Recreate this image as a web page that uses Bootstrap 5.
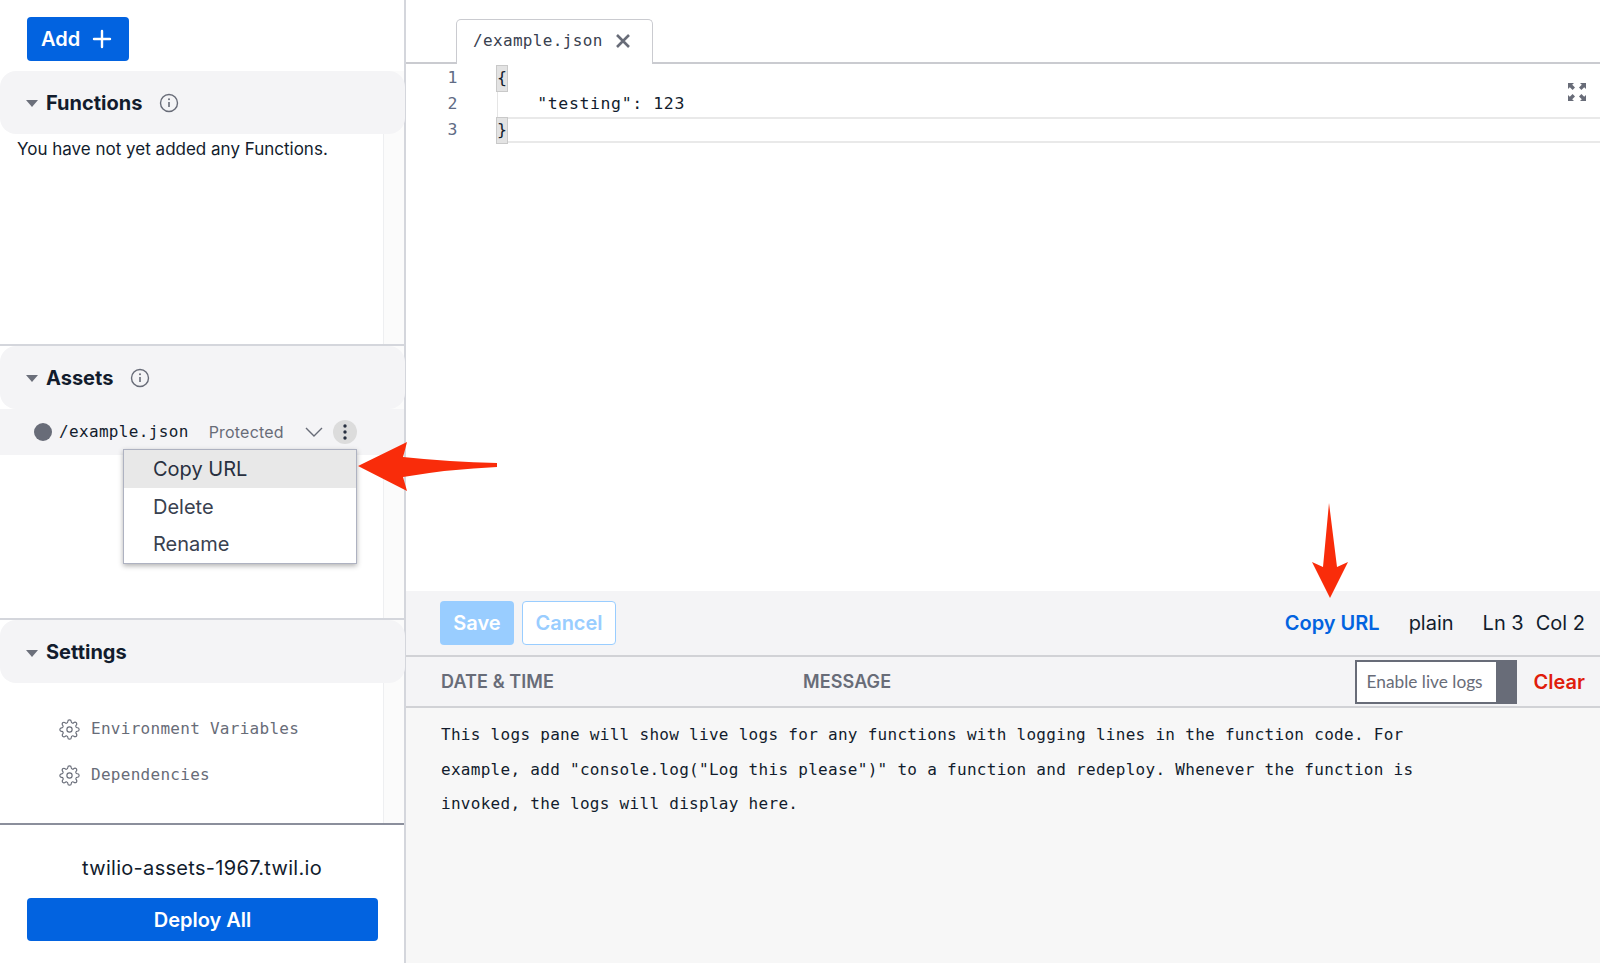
<!DOCTYPE html>
<html lang="en"><head><meta charset="utf-8"><title>Assets</title>
<link href="https://cdn.jsdelivr.net/npm/bootstrap@5.3.0/dist/css/bootstrap.min.css" rel="stylesheet">
<style>
html,body{height:963px;overflow:hidden}
body{font-family:Inter,"Liberation Sans",sans-serif;color:#121c2d;background:#fff;position:relative}
.mono{font-family:"DejaVu Sans Mono",monospace;font-size:16px;letter-spacing:.29px}
.side{width:406px;height:963px;border-right:2px solid #d4d6dc;position:relative}
.addwrap{height:71px;padding:17px 0 0 27px}
.btn-add{background:#0263e0;color:#fff;font-weight:600;font-size:20px;width:102px;height:44px;border-radius:4px;padding:0 0 0 14px;border:0;line-height:44px;text-align:left}
.btn-add:hover{background:#0263e0;color:#fff}
.plus{margin-left:11px}
.sec{position:relative}
.sec-fn{height:273px}.sec-as{height:275px;border-top:2px solid #d4d6dc}.sec-se{height:205px;border-top:2px solid #d4d6dc}
.sbar{position:absolute;right:0;top:0;bottom:0;width:21px;background:#fbfbfb;border-left:1px solid #eeeff1}
.head{position:relative;z-index:1;height:63px;background:#f4f4f6;border-radius:16px;padding:1px 0 0 26px;font-size:20px;font-weight:700;margin-right:-1px}
.caret{width:0;height:0;border-left:6px solid transparent;border-right:6px solid transparent;border-top:7px solid #6b6f7a;margin-right:8px;margin-top:2px}
.info{margin-left:17px}
.empty{position:relative;z-index:1;font-size:17px;padding:3px 0 0 17px;margin:0}
.asset{position:relative;z-index:1;height:46px;background:#f4f4f6;padding-left:34px}
.dot{width:18px;height:18px;border-radius:50%;background:#686c78;margin-right:7px}
.asset .mono{letter-spacing:.34px}
.prot{font-size:16px;color:#686c78;margin-left:20px;letter-spacing:.2px}
.chev{margin-left:21px}
.kebab{width:24px;height:24px;border-radius:50%;background:#dcdcdc;margin-left:10px}
.menu-box{position:absolute;z-index:3;left:123px;top:449px;width:234px;height:115px;background:#fff;border:1px solid #aeb2c1;border-radius:0;box-shadow:0 2px 5px rgba(0,0,0,.3);padding:0;margin:0}
.menu-box .dropdown-item{height:37.5px;line-height:38px;padding:0 0 0 29px;font-size:20px;color:#39414f}
.menu-box .dropdown-item.on{background:#e8e8e8;color:#283040}
.setlist{position:relative;z-index:1;margin:0;list-style:none;padding:23px 0 0}
.setitem{height:46px;padding-left:59px;color:#686c78;gap:11px}
.setitem .mono{letter-spacing:.28px}
.foot{border-top:2px solid #8b8f9c;height:140px;padding:0 27px}
.domain{font-size:20px;text-align:center;padding-top:28px;height:73px;margin:0;letter-spacing:.3px}
.btn-dep{background:#0263e0;color:#fff;font-weight:600;font-size:20px;width:351px;height:43px;border-radius:4px;border:0;padding:0;display:block}
.btn-dep:hover{background:#0263e0;color:#fff}
.main{flex:1;min-width:0;height:963px}
.tabs{height:64px;border-bottom:2px solid #cacbd0;padding-left:50px;position:relative}
.tabx{width:197px;height:45px;margin-top:18px;background:#fff;border:1px solid #cacbd0;border-bottom:0;border-radius:5px 5px 0 0;padding:0 0 2px 16px;position:relative;top:1px;color:#39414f;gap:12px}
.tabx .mono{letter-spacing:.34px}
.editor{height:527px;position:relative;padding-top:1px;font-size:16.5px;letter-spacing:.57px}
.codeline{height:26px;line-height:26px;position:relative}
.num{position:absolute;left:34px;width:18px;text-align:right;color:#606b85;top:0}
.code{position:absolute;left:91px;white-space:pre;color:#121c2d;top:0}
.code-in{left:89px;letter-spacing:.62px}
.brk{display:inline-block;width:10px;height:25px;line-height:24px;background:#e3e3e3;outline:1px solid #c9c9c9}
.indent{position:absolute;left:91px;top:1px;height:78px;width:1px;background:#e5e5e5}
.lineh{position:absolute;left:102px;right:0;height:2px;background:#e9e9e9}
.lh1{top:53px}.lh2{top:77px}
.expand{position:absolute;right:14px;top:19px}
.stat{height:66px;background:#f4f4f6;border-bottom:2px solid #d1d2d6;padding:0 15px 0 34px}
.btn-save{font-weight:600;font-size:20px;width:74px;height:44px;border-radius:4px;padding:0}
.btn-can{font-weight:600;font-size:20px;width:94px;height:44px;border-radius:4px;padding:0;margin-left:8px}
.btn-save:disabled{opacity:1;background:#99cdff;color:#fff;border:0}
.btn-can:disabled{opacity:1;background:#fff;color:#99cdff;border:1px solid #99cdff}
.stat-r{font-size:20px}
.lnk{color:#0263e0;font-weight:600;text-decoration:none;margin-right:29px}
.lang{margin-right:29px}.ln{margin-right:12px}
.lhead{height:51px;background:#f4f4f6;border-bottom:2px solid #d1d2d6;padding:0 15px 0 35px;color:#686c78;font-weight:600;font-size:18px;letter-spacing:.1px}
.lhead .h1x{width:362px}
.tog{width:162px;height:44px;border:2px solid #686c78;background:#fff;font-family:Lato,sans-serif;font-size:17.3px;font-weight:400;color:#686c78;padding-left:10px;position:relative;margin-left:auto;margin-right:17px;letter-spacing:0}
.tog i{position:absolute;right:0;top:0;bottom:0;width:19px;background:#686c78}
.clr{color:#e01d0c;font-size:20px;font-weight:600;letter-spacing:0}
.logs{background:#f7f7f7;height:255px;padding:10px 120px 0 35px;line-height:34.5px;color:#121c2d}
.arrow{position:absolute;z-index:4;pointer-events:none}
.a1{left:355px;top:438px}.a2{left:1300px;top:500px}
</style></head><body>
<div class="d-flex">
<aside class="side d-flex flex-column">
 <div class="addwrap"><button class="btn btn-add d-flex align-items-center">Add<svg class="plus" width="22" height="22" viewBox="0 0 22 22"><path d="M11 3v16M3 11h16" stroke="#fff" stroke-width="2.4" stroke-linecap="round"/></svg></button></div>
 <section class="sec sec-fn"><div class="sbar"></div>
  <div class="head d-flex align-items-center"><span class="caret"></span>Functions<svg class="info" width="20" height="20" viewBox="0 0 20 20"><circle cx="10" cy="10" r="8.5" fill="none" stroke="#686c78" stroke-width="1.4"/><path d="M10 9v5" stroke="#686c78" stroke-width="1.6"/><circle cx="10" cy="6.2" r="1" fill="#686c78"/></svg></div>
  <p class="empty">You have not yet added any Functions.</p>
 </section>
 <section class="sec sec-as"><div class="sbar"></div>
  <div class="head d-flex align-items-center"><span class="caret"></span>Assets<svg class="info" width="20" height="20" viewBox="0 0 20 20"><circle cx="10" cy="10" r="8.5" fill="none" stroke="#686c78" stroke-width="1.4"/><path d="M10 9v5" stroke="#686c78" stroke-width="1.6"/><circle cx="10" cy="6.2" r="1" fill="#686c78"/></svg></div>
  <div class="asset d-flex align-items-center"><span class="dot"></span><span class="mono">/example.json</span><span class="prot">Protected</span>
   <svg class="chev" width="18" height="12" viewBox="0 0 18 12"><path d="M1 2l8 8 8-8" fill="none" stroke="#686c78" stroke-width="1.4"/></svg>
   <span class="kebab d-flex align-items-center justify-content-center"><svg width="4" height="18" viewBox="0 0 4 18"><circle cx="2" cy="3" r="1.7" fill="#283040"/><circle cx="2" cy="9" r="1.7" fill="#283040"/><circle cx="2" cy="15" r="1.7" fill="#283040"/></svg></span></div>
 </section>
 <section class="sec sec-se"><div class="sbar"></div>
  <div class="head d-flex align-items-center"><span class="caret"></span>Settings</div>
  <ul class="setlist">
   <li class="setitem d-flex align-items-center"><svg width="21" height="21" viewBox="0 0 24 24" fill="none" stroke="#686c78" stroke-width="1.3"><circle cx="12" cy="12" r="3"/><path d="M19.4 15a1.65 1.65 0 0 0 .33 1.82l.06.06a2 2 0 0 1 0 2.83 2 2 0 0 1-2.83 0l-.06-.06a1.65 1.65 0 0 0-1.82-.33 1.65 1.65 0 0 0-1 1.51V21a2 2 0 0 1-2 2 2 2 0 0 1-2-2v-.09A1.65 1.65 0 0 0 9 19.4a1.65 1.65 0 0 0-1.82.33l-.06.06a2 2 0 0 1-2.83 0 2 2 0 0 1 0-2.83l.06-.06a1.65 1.65 0 0 0 .33-1.82 1.65 1.65 0 0 0-1.51-1H3a2 2 0 0 1-2-2 2 2 0 0 1 2-2h.09A1.65 1.65 0 0 0 4.6 9a1.65 1.65 0 0 0-.33-1.82l-.06-.06a2 2 0 0 1 0-2.83 2 2 0 0 1 2.83 0l.06.06a1.65 1.65 0 0 0 1.82.33H9a1.65 1.65 0 0 0 1-1.51V3a2 2 0 0 1 2-2 2 2 0 0 1 2 2v.09a1.65 1.65 0 0 0 1 1.51 1.65 1.65 0 0 0 1.82-.33l.06-.06a2 2 0 0 1 2.83 0 2 2 0 0 1 0 2.83l-.06.06a1.65 1.65 0 0 0-.33 1.82V9a1.65 1.65 0 0 0 1.51 1H21a2 2 0 0 1 2 2 2 2 0 0 1-2 2h-.09a1.65 1.65 0 0 0-1.51 1z"/></svg><span class="mono">Environment Variables</span></li>
   <li class="setitem d-flex align-items-center"><svg width="21" height="21" viewBox="0 0 24 24" fill="none" stroke="#686c78" stroke-width="1.3"><circle cx="12" cy="12" r="3"/><path d="M19.4 15a1.65 1.65 0 0 0 .33 1.82l.06.06a2 2 0 0 1 0 2.83 2 2 0 0 1-2.83 0l-.06-.06a1.65 1.65 0 0 0-1.82-.33 1.65 1.65 0 0 0-1 1.51V21a2 2 0 0 1-2 2 2 2 0 0 1-2-2v-.09A1.65 1.65 0 0 0 9 19.4a1.65 1.65 0 0 0-1.82.33l-.06.06a2 2 0 0 1-2.83 0 2 2 0 0 1 0-2.83l.06-.06a1.65 1.65 0 0 0 .33-1.82 1.65 1.65 0 0 0-1.51-1H3a2 2 0 0 1-2-2 2 2 0 0 1 2-2h.09A1.65 1.65 0 0 0 4.6 9a1.65 1.65 0 0 0-.33-1.82l-.06-.06a2 2 0 0 1 0-2.83 2 2 0 0 1 2.83 0l.06.06a1.65 1.65 0 0 0 1.82.33H9a1.65 1.65 0 0 0 1-1.51V3a2 2 0 0 1 2-2 2 2 0 0 1 2 2v.09a1.65 1.65 0 0 0 1 1.51 1.65 1.65 0 0 0 1.82-.33l.06-.06a2 2 0 0 1 2.83 0 2 2 0 0 1 0 2.83l-.06.06a1.65 1.65 0 0 0-.33 1.82V9a1.65 1.65 0 0 0 1.51 1H21a2 2 0 0 1 2 2 2 2 0 0 1-2 2h-.09a1.65 1.65 0 0 0-1.51 1z"/></svg><span class="mono">Dependencies</span></li>
  </ul>
 </section>
 <div class="foot"><p class="domain">twilio-assets-1967.twil.io</p><button class="btn btn-dep">Deploy All</button></div>
</aside>
<main class="main d-flex flex-column">
 <div class="tabs"><div class="tabx d-flex align-items-center"><span class="mono">/example.json</span><svg width="16" height="16" viewBox="0 0 16 16"><path d="M2 2l12 12M14 2L2 14" stroke="#686c78" stroke-width="2.6"/></svg></div></div>
 <div class="editor mono">
  <div class="indent"></div><div class="lineh lh1"></div><div class="lineh lh2"></div>
  <div class="codeline"><span class="num">1</span><span class="code"><span class="brk">{</span></span></div>
  <div class="codeline"><span class="num">2</span><span class="code code-in">    "testing": 123</span></div>
  <div class="codeline"><span class="num">3</span><span class="code"><span class="brk">}</span></span></div>
  <svg class="expand" width="18" height="18" viewBox="0 0 18 18" fill="#686c78"><path d="M0 0h6L4.2 1.8 7 4.6 4.6 7 1.8 4.2 0 6zM18 0v6l-1.8-1.8L13.4 7 11 4.6l2.8-2.8L12 0zM0 18v-6l1.8 1.8L4.6 11 7 13.4l-2.8 2.8L6 18zM18 18h-6l1.8-1.8L11 13.4l2.4-2.4 2.8 2.8L18 12z"/></svg>
 </div>
 <div class="stat d-flex align-items-center"><button class="btn btn-save" disabled>Save</button><button class="btn btn-can" disabled>Cancel</button>
  <div class="stat-r ms-auto d-flex"><a class="lnk" href="#">Copy URL</a><span class="lang">plain</span><span class="ln">Ln 3</span><span>Col 2</span></div></div>
 <div class="lhead d-flex align-items-center"><span class="h1x">DATE &amp; TIME</span><span>MESSAGE</span><div class="tog d-flex align-items-center">Enable live logs<i></i></div><span class="clr">Clear</span></div>
 <div class="logs mono">This logs pane will show live logs for any functions with logging lines in the function code. For example, add "console.log("Log this please")" to a function and redeploy. Whenever the function is invoked, the logs will display here.</div>
</main>
</div>
<div class="menu-box dropdown-menu show"><a class="dropdown-item on" href="#">Copy URL</a><a class="dropdown-item" href="#">Delete</a><a class="dropdown-item" href="#">Rename</a></div>
<svg class="arrow a1" width="145" height="60" viewBox="0 0 145 60"><path d="M3 28L52 4Q50 12 48 19Q95 24 142 25V29Q95 31 48 39Q50 46 52 53z" fill="#f92c0a"/></svg>
<svg class="arrow a2" width="60" height="102" viewBox="0 0 60 102"><path d="M29 3L37 67 48 62 30 98 12 62 23 67z" fill="#f92c0a"/></svg>
</body></html>
